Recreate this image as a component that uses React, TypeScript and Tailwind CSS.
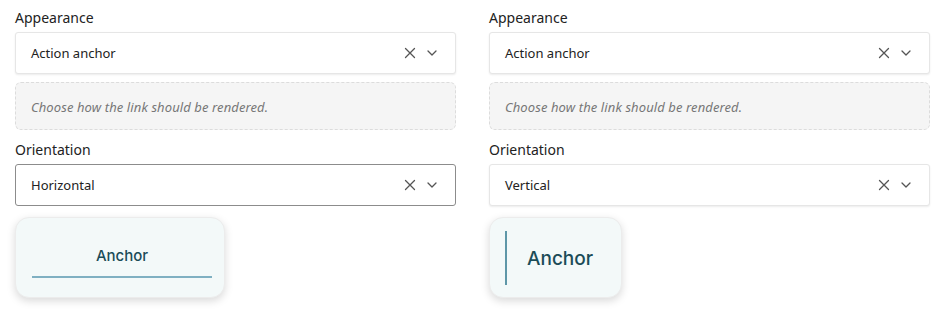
import React from "react";

const XIcon = () => (
  <svg width="12" height="12" viewBox="0 0 12 12" fill="none" stroke="#555" strokeWidth="1.3" strokeLinecap="round">
    <path d="M1.5 1.5l9 9M10.5 1.5l-9 9" />
  </svg>
);

const Chevron = () => (
  <svg width="10" height="6" viewBox="0 0 10 6" fill="none" stroke="#555" strokeWidth="1.3" strokeLinecap="round" strokeLinejoin="round">
    <path d="M1 1l4 4 4-4" />
  </svg>
);

interface SelectProps {
  value: string;
  focused?: boolean;
}

const Select: React.FC<SelectProps> = ({ value, focused }) => (
  <div
    className={`h-[42px] flex items-center justify-between pl-[15px] pr-[18px] bg-white rounded-[3px] border ${
      focused ? "border-[#8c8c8c]" : "border-[#e6e6e6] shadow-[0_1px_2px_rgba(0,0,0,0.08)]"
    }`}
  >
    <span className="text-[13px] text-[#222] pt-[1px]">{value}</span>
    <div className="flex items-center gap-[11px]">
      <XIcon />
      <Chevron />
    </div>
  </div>
);

const Column: React.FC<{ orientation: string; vertical?: boolean }> = ({ orientation, vertical }) => (
  <div className="w-[441px] flex flex-col">
    <label className="text-[14px] text-[#222] leading-[20px]">Appearance</label>
    <div className="mt-[4px]">
      <Select value="Action anchor" />
    </div>
    <div className="mt-[8px] h-[48px] flex items-center px-[15px] pt-[4px] bg-[#f5f5f5] border border-dashed border-[#dcdcdc] rounded-[6px]">
      <span className="italic text-[13px] tracking-[0.1px] text-[#777]">Choose how the link should be rendered.</span>
    </div>
    <label className="mt-[10px] text-[14px] text-[#222] leading-[20px]">Orientation</label>
    <div className="mt-[4px]">
      <Select value={orientation} focused={!vertical} />
    </div>
    {vertical ? (
      <div className="mt-[11px] w-[133px] h-[81px] rounded-[14px] border border-[#ececec] bg-[#f3f9f9] shadow-[0_3px_8px_rgba(0,0,0,0.15)] flex items-stretch pt-[13px] pb-[12px] pl-[15px]">
        <div className="w-[2px] bg-[#5e97a8]" />
        <span className="ml-[20px] self-center pt-[3px] font-['Inter',sans-serif] font-medium text-[19px] text-[#1b4c58]">Anchor</span>
      </div>
    ) : (
      <div className="mt-[11px] w-[210px] h-[81px] rounded-[14px] border border-[#ececec] bg-[#f3f9f9] shadow-[0_3px_8px_rgba(0,0,0,0.15)] flex flex-col items-stretch pl-[16px] pr-[12px] pt-[28px]">
        <span className="text-center font-['Inter',sans-serif] font-medium text-[15px] leading-[20px] text-[#1b4c58]">Anchor</span>
        <div className="mt-[10px] h-[2px] bg-[#7fb0c2]" />
      </div>
    )}
  </div>
);

export default function App() {
  return (
    <div className="w-[945px] h-[316px] bg-white flex gap-[33px] pl-[15px] pt-[8px] font-['Noto_Sans','Open_Sans',sans-serif]">
      <Column orientation="Horizontal" />
      <Column orientation="Vertical" vertical />
    </div>
  );
}
